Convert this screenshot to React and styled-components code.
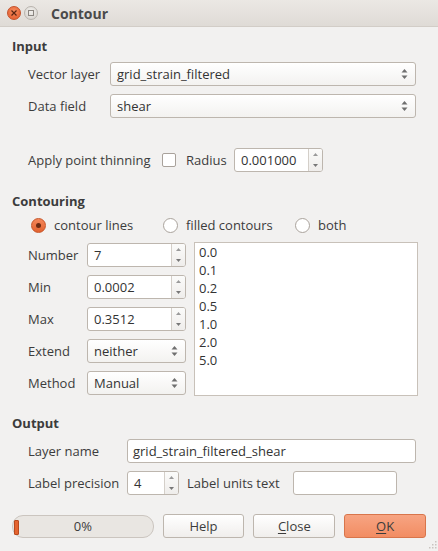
import React from "react";
import styled, { createGlobalStyle } from "styled-components";

const GlobalStyle = createGlobalStyle`
  html, body {
    margin: 0;
    padding: 0;
    background: #f2f1f0;
  }
  body {
    font-family: "Open Sans", "DejaVu Sans", sans-serif;
    font-size: 13px;
    color: #3c3c3c;
  }
`;

const Window = styled.div`
  width: 438px;
  height: 551px;
  display: flex;
  flex-direction: column;
  position: relative;
  background: #f2f1f0;
  overflow: hidden;
`;

const TitleBar = styled.div`
  height: 26px;
  display: flex;
  align-items: center;
  padding-left: 7px;
  background: linear-gradient(#ebe8e4, #dfdbd6);
  border-bottom: 1px solid #d2cdc7;
  & > span {
    margin-left: 10px;
    font-weight: 700;
    font-size: 14px;
    color: #4a4a4a;
  }
`;

const WinButton = styled.div`
  width: 14px;
  height: 14px;
  border-radius: 50%;
  margin-right: 3px;
  display: flex;
  align-items: center;
  justify-content: center;
  box-sizing: border-box;
  background: ${p => (p.$close
    ? "radial-gradient(circle at 50% 35%, #f68a5c, #e2592a)"
    : "radial-gradient(circle at 50% 35%, #f1efec, #d4d0cb)")};
  border: 1px solid ${p => (p.$close ? "#c4512a" : "#b9b4ae")};
`;

const Content = styled.div`
  display: flex;
  flex-direction: column;
  padding: 10px 12px 0;
`;

const SectionTitle = styled.div`
  font-weight: 700;
  line-height: 18px;
  margin-top: ${p => p.$mt || 0}px;
`;

const Row = styled.div`
  display: flex;
  align-items: center;
  height: 24px;
  padding: 0 10px 0 16px;
  margin-top: ${p => p.$mt || 0}px;
`;

const RadioRow = styled(Row)`
  height: 18px;
  padding-left: 19px;
`;

const Label = styled.div`
  width: ${p => p.$w}px;
  padding-left: ${p => p.$pl || 0}px;
  box-sizing: border-box;
  flex: none;
  white-space: nowrap;
`;

const FieldBase = styled.div`
  box-sizing: border-box;
  height: 24px;
  border: 1px solid #bdb6ae;
  border-radius: 3px;
  display: flex;
  align-items: center;
  color: #333;
  flex: ${p => (p.$w ? "none" : 1)};
  width: ${p => (p.$w ? `${p.$w}px` : "auto")};
`;

const ComboBox = styled(FieldBase)`
  background: linear-gradient(#ffffff, #f3f2f0);
  padding: 0 7px 0 6px;
  & > span {
    flex: 1;
  }
`;

const TextInput = styled(FieldBase)`
  background: #fff;
  padding: 0 5px;
`;

const SpinBody = styled(FieldBase)`
  background: #fff;
  padding-left: 6px;
  overflow: hidden;
  & > span {
    flex: 1;
  }
`;

const SpinButtons = styled.div`
  width: 13px;
  align-self: stretch;
  border-left: 1px solid #d4cfc9;
  background: linear-gradient(#fbfbfa, #efedeb);
  display: flex;
  align-items: center;
  justify-content: center;
`;

const CheckBox = styled.div`
  width: 14px;
  height: 14px;
  box-sizing: border-box;
  border: 1px solid #a9a29b;
  border-radius: 2px;
  background: #fff;
  flex: none;
  margin-right: 10px;
`;

const RadioOption = styled.div`
  width: ${p => p.$w}px;
  display: flex;
  align-items: center;
  flex: none;
`;

const RadioDot = styled.div`
  width: 15px;
  height: 15px;
  box-sizing: border-box;
  border-radius: 50%;
  margin-right: 8px;
  display: flex;
  align-items: center;
  justify-content: center;
  border: 1px solid ${p => (p.$on ? "#c75427" : "#aaa39c")};
  background: ${p => (p.$on ? "linear-gradient(#f4875a, #e2622f)" : "#fff")};
  &::after {
    content: "";
    display: ${p => (p.$on ? "block" : "none")};
    width: 5px;
    height: 5px;
    border-radius: 50%;
    background: #6b2a12;
  }
`;

const ContourGrid = styled.div`
  display: flex;
  margin-top: 8px;
  padding-left: 16px;
`;

const FieldColumn = styled.div`
  display: flex;
  flex-direction: column;
  gap: 8px;
  padding-top: 1px;
  margin-right: 8px;
`;

const GridRow = styled.div`
  display: flex;
  align-items: center;
  height: 24px;
`;

const ListBox = styled.div`
  width: 224px;
  height: 154px;
  box-sizing: border-box;
  background: #fff;
  border: 1px solid #c8c1b9;
  padding: 0 4px;
  & > div {
    line-height: 18px;
    color: #333;
  }
`;

const Footer = styled.div`
  display: flex;
  align-items: center;
  gap: 9px;
  margin-top: 19px;
`;

const Progress = styled.div`
  width: 142px;
  height: 23px;
  box-sizing: border-box;
  border: 1px solid #cbc5bf;
  border-radius: 11px;
  background: #e9e6e2;
  position: relative;
  display: flex;
  align-items: center;
  justify-content: center;
  &::before {
    content: "";
    position: absolute;
    left: 1px;
    top: 4px;
    width: 3px;
    height: 13px;
    border-radius: 1px;
    background: #e4642f;
    border: 1px solid #b94a1e;
  }
`;

const Button = styled.div`
  width: 82px;
  height: 24px;
  box-sizing: border-box;
  border-radius: 3px;
  display: flex;
  align-items: center;
  justify-content: center;
  border: 1px solid ${p => (p.$primary ? "#d8754b" : "#bdb6ae")};
  background: ${p => (p.$primary
    ? "linear-gradient(#f7a482, #f28d63)"
    : "linear-gradient(#ffffff, #f0eeec)")};
  & > u {
    text-decoration-thickness: 1px;
    text-underline-offset: 2px;
  }
`;

const SizeGrip = styled.svg`
  position: absolute;
  right: 1px;
  bottom: 2px;
`;

function ComboArrows() {
  return (
    <svg width="7" height="12" viewBox="0 0 7 12">
      <polygon points="0.5,4.5 3.5,1 6.5,4.5" fill="#6f6f6f" />
      <polygon points="0.5,7.5 3.5,11 6.5,7.5" fill="#6f6f6f" />
    </svg>
  );
}

function SpinArrows() {
  return (
    <svg width="7" height="22" viewBox="0 0 7 22">
      <polygon points="1,7 3.5,4 6,7" fill="#9a9a9a" />
      <polygon points="1,15 3.5,18 6,15" fill="#777" />
    </svg>
  );
}

function Combo({ value, w }) {
  return (
    <ComboBox $w={w}>
      <span>{value}</span>
      <ComboArrows />
    </ComboBox>
  );
}

function Spin({ value, w }) {
  return (
    <SpinBody $w={w}>
      <span>{value}</span>
      <SpinButtons>
        <SpinArrows />
      </SpinButtons>
    </SpinBody>
  );
}

const levels = ["0.0", "0.1", "0.2", "0.5", "1.0", "2.0", "5.0"];

export default function App() {
  return (
    <Window>
      <GlobalStyle />
      <TitleBar>
        <WinButton $close>
          <svg width="6" height="6" viewBox="0 0 6 6">
            <path d="M0.5 0.5 L5.5 5.5 M5.5 0.5 L0.5 5.5" stroke="#5a2412" strokeWidth="1.2" />
          </svg>
        </WinButton>
        <WinButton>
          <svg width="6" height="6" viewBox="0 0 6 6">
            <rect x="0.5" y="0.5" width="5" height="5" fill="none" stroke="#8a8580" strokeWidth="1" />
          </svg>
        </WinButton>
        <span>Contour</span>
      </TitleBar>

      <Content>
        <SectionTitle>Input</SectionTitle>
        <Row $mt={7}>
          <Label $w={82}>Vector layer</Label>
          <Combo value="grid_strain_filtered" />
        </Row>
        <Row $mt={8}>
          <Label $w={82}>Data field</Label>
          <Combo value="shear" />
        </Row>

        <Row $mt={30}>
          <Label $w={134}>Apply point thinning</Label>
          <CheckBox />
          <Label $w={48}>Radius</Label>
          <Spin value="0.001000" w={89} />
        </Row>

        <SectionTitle $mt={20}>Contouring</SectionTitle>
        <RadioRow $mt={6}>
          <RadioOption $w={132}>
            <RadioDot $on />
            contour lines
          </RadioOption>
          <RadioOption $w={132}>
            <RadioDot />
            filled contours
          </RadioOption>
          <RadioOption $w={80}>
            <RadioDot />
            both
          </RadioOption>
        </RadioRow>

        <ContourGrid>
          <FieldColumn>
            <GridRow>
              <Label $w={59}>Number</Label>
              <Spin value="7" w={99} />
            </GridRow>
            <GridRow>
              <Label $w={59}>Min</Label>
              <Spin value="0.0002" w={99} />
            </GridRow>
            <GridRow>
              <Label $w={59}>Max</Label>
              <Spin value="0.3512" w={99} />
            </GridRow>
            <GridRow>
              <Label $w={59}>Extend</Label>
              <Combo value="neither" w={99} />
            </GridRow>
            <GridRow>
              <Label $w={59}>Method</Label>
              <Combo value="Manual" w={99} />
            </GridRow>
          </FieldColumn>
          <ListBox>
            {levels.map(l => (
              <div key={l}>{l}</div>
            ))}
          </ListBox>
        </ContourGrid>

        <SectionTitle $mt={18}>Output</SectionTitle>
        <Row $mt={7}>
          <Label $w={99}>Layer name</Label>
          <TextInput>grid_strain_filtered_shear</TextInput>
        </Row>
        <Row $mt={8}>
          <Label $w={99}>Label precision</Label>
          <Spin value="4" w={52} />
          <Label $w={114} $pl={8}>Label units text</Label>
          <TextInput $w={104} />
        </Row>

        <Footer>
          <Progress>0%</Progress>
          <Button>Help</Button>
          <Button><u>C</u>lose</Button>
          <Button $primary><u>O</u>K</Button>
        </Footer>
      </Content>

      <SizeGrip width="8" height="8" viewBox="0 0 8 8">
        {[[6, 0], [6, 3], [3, 3], [6, 6], [3, 6], [0, 6]].map(([x, y]) => (
          <rect key={`${x}-${y}`} x={x} y={y} width="1.5" height="1.5" fill="#c9c4bf" />
        ))}
      </SizeGrip>
    </Window>
  );
}
